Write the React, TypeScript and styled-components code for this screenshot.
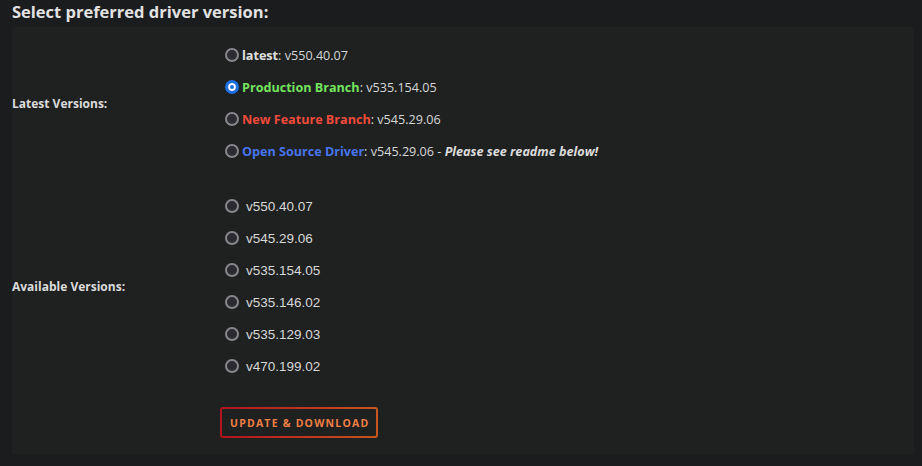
import React, { useState } from 'react'
import styled, { createGlobalStyle } from 'styled-components'

const GlobalStyle = createGlobalStyle`
	html, body {
		margin: 0;
		padding: 0;
		background: #1b1c1e;
	}
	body {
		font-family: "Open Sans", "Noto Sans", sans-serif;
		color: #e6e6e6;
	}
`

const Page = styled.div`
	padding: 0 8px 11px 12px;
	box-sizing: border-box;
	width: 922px;
`

const Title = styled.h2`
	margin: 0;
	padding: 3px 0 6px;
	font-size: 16.5px;
	font-weight: 700;
	line-height: 18px;
	color: #e2e2e2;
`

const Panel = styled.div`
	background: #1f2020;
	padding: 12px 0 16px;
	display: flex;
	flex-direction: column;
	gap: 23px;
`

const Section = styled.div`
	display: grid;
	grid-template-columns: 213px 1fr;
	align-items: center;
`

const SectionLabel = styled.div`
	font-size: 12px;
	font-weight: 700;
	color: #dcdcdc;
`

const Options = styled.div`
	display: flex;
	flex-direction: column;
`

const Option = styled.label<{ $plain?: boolean }>`
	display: flex;
	align-items: center;
	height: 32px;
	gap: ${(p) => (p.$plain ? '7px' : '3px')};
	font-family: ${(p) => (p.$plain ? '"Liberation Sans", Arial, sans-serif' : '"Open Sans", sans-serif')};
	font-size: ${(p) => (p.$plain ? '13.5px' : '12.6px')};
	color: #d8d8d8;
	cursor: pointer;
`

const Radio = styled.input.attrs({ type: 'radio' })`
	appearance: none;
	margin: 0;
	width: 14px;
	height: 14px;
	border-radius: 50%;
	border: 2px solid #87878c;
	background: #2b2b30;
	box-sizing: border-box;
	flex-shrink: 0;
	&:checked {
		border: 3px solid #1f6fe0;
		background: #1f6fe0;
		box-shadow: inset 0 0 0 2px #ffffff;
	}
`

const Name = styled.b<{ $color?: string }>`
	font-weight: 700;
	color: ${(p) => p.$color ?? '#e0e0e0'};
`

const Note = styled.i`
	font-weight: 700;
	color: #dcdcdc;
`

const Actions = styled.div`
	padding-left: 208px;
	margin-top: 2px;
`

const UpdateBtn = styled.button`
	height: 31px;
	padding: 0 7px 0 8px;
	border: 2px solid transparent;
	border-radius: 3px;
	background:
		linear-gradient(#1f2020, #1f2020) padding-box,
		linear-gradient(90deg, #b3121e, #c8561c) border-box;
	color: #f07f45;
	font-family: "Open Sans", sans-serif;
	font-size: 10.5px;
	font-weight: 700;
	letter-spacing: 1.2px;
	cursor: pointer;
`

const latest = [
	{ id: 'latest', name: 'latest', color: undefined, version: 'v550.40.07' },
	{ id: 'production', name: 'Production Branch', color: '#74e35f', version: 'v535.154.05' },
	{ id: 'feature', name: 'New Feature Branch', color: '#f04b3b', version: 'v545.29.06' },
	{ id: 'open', name: 'Open Source Driver', color: '#4775ee', version: 'v545.29.06', note: 'Please see readme below!' },
]

const available = ['v550.40.07', 'v545.29.06', 'v535.154.05', 'v535.146.02', 'v535.129.03', 'v470.199.02']

export default function App() {
	const [selected, setSelected] = useState('production')

	return (
		<Page>
			<GlobalStyle />
			<Title>Select preferred driver version:</Title>
			<Panel>
				<Section>
					<SectionLabel>Latest Versions:</SectionLabel>
					<Options>
						{latest.map((item) => (
							<Option key={item.id}>
								<Radio name="drv" checked={selected === item.id} onChange={() => setSelected(item.id)} />
								<span>
									<Name $color={item.color}>{item.name}</Name>: {item.version}
									{item.note && <> - <Note>{item.note}</Note></>}
								</span>
							</Option>
						))}
					</Options>
				</Section>
				<Section>
					<SectionLabel>Available Versions:</SectionLabel>
					<Options>
						{available.map((v) => (
							<Option key={v} $plain>
								<Radio name="drv" checked={selected === 'a' + v} onChange={() => setSelected('a' + v)} />
								<span>{v}</span>
							</Option>
						))}
					</Options>
				</Section>
				<Actions>
					<UpdateBtn>UPDATE &amp; DOWNLOAD</UpdateBtn>
				</Actions>
			</Panel>
		</Page>
	)
}
